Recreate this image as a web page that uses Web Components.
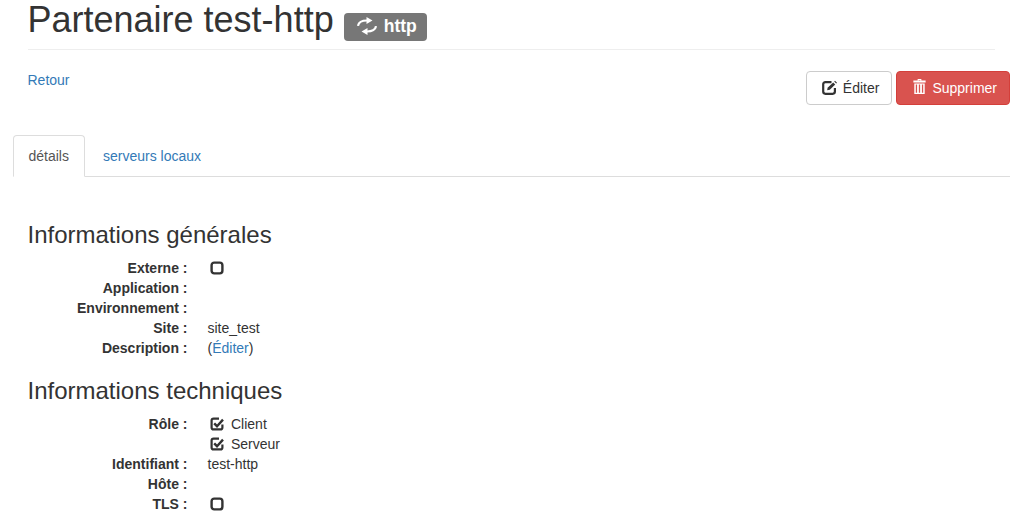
<!DOCTYPE html>
<html lang="fr">
<head>
<meta charset="utf-8">
<title>Partenaire test-http</title>
<style>
  html, body { margin: 0; background: #fff; }
  body {
    font: 14px/20px "Liberation Sans", Arial, sans-serif;
    color: #333;
    height: 520px;
    overflow: hidden;
  }
</style>
</head>
<body>
<partner-page>
  <page-title name="Partenaire test-http" kind="http"></page-title>
  <page-actions></page-actions>
  <page-tabs></page-tabs>
  <info-section title="Informations générales">
    <info-row label="Externe"><check-mark></check-mark></info-row>
    <info-row label="Application"></info-row>
    <info-row label="Environnement"></info-row>
    <info-row label="Site">site_test</info-row>
    <info-row label="Description">(<a href="#" style="color:#337ab7;text-decoration:none">Éditer</a>)</info-row>
  </info-section>
  <info-section title="Informations techniques">
    <info-row label="Rôle"><check-mark checked>Client</check-mark></info-row>
    <info-row><check-mark checked>Serveur</check-mark></info-row>
    <info-row label="Identifiant">test-http</info-row>
    <info-row label="Hôte"></info-row>
    <info-row label="TLS"><check-mark></check-mark></info-row>
  </info-section>
</partner-page>

<script>
const ICONS = {
    retweet: `<g fill="none" stroke="#fff" stroke-width="2.2"><path d="M1 8.8C1.6 5 4 3.5 10 3.5"/><path d="M19 9.2C18.4 13 16 14.5 10 14.5"/></g><path d="M9.5 0 15.5 3.5 9.5 7ZM10.5 11 4.5 14.5 10.5 18Z" fill="#fff"/>`,
    edit: `<g fill="none" stroke="currentColor" stroke-width="2.2"><path d="M9.5 2.1H3.4C2 2.1 1.2 2.9 1.2 4.3v7.3c0 1.4.8 2.2 2.2 2.2h7.3c1.4 0 2.2-.8 2.2-2.2V8"/></g><path d="M11.2 2.4 13.2 4.4 7.8 9.8 5.2 10.2 5.6 7.8Z"/><path d="M12.2 1.6 13 .8 15 2.8 14.2 3.6Z"/>`,
    trash: `<path d="M5 0h4v1.6h4.6v2H.4v-2H5V.9H6V1.6h2V.9H5ZM1.4 4.4h11.2V15H1.4ZM3 5.6V13.8H4.4V5.6ZM6.3 5.6V13.8H7.7V5.6ZM9.6 5.6V13.8H11V5.6Z" fill-rule="evenodd"/>`
};

class PartnerPage extends HTMLElement {
    constructor() {
        super();
        this.attachShadow({ mode: "open" });
        this.shadowRoot.innerHTML = `
      <style>
        :host { display: block; padding: 0 7px 0 12.5px; }
      </style>
      <slot></slot>
    `;
    }
}

class PageTitle extends HTMLElement {
    constructor() {
        super();
        this.attachShadow({ mode: "open" });
    }

    connectedCallback() {
        this.shadowRoot.innerHTML = `
      <style>
        :host { display: block; margin: 0 15px; padding-bottom: 9px; border-bottom: 1px solid #eee; height: 39.6px; }
        h1 { margin: 0; font: 500 36px/1.1 "Liberation Sans", Arial, sans-serif; color: #333; white-space: nowrap; height: 39.6px; }
        .label {
          display: inline-flex;
          align-items: center;
          gap: 7px;
          padding: 3px 10px 4px 13px;
          height: 21px;
          border-radius: 4px;
          background: #777;
          color: #fff;
          font-size: 17.55px;
          line-height: 21px;
          font-weight: 700;
          vertical-align: -3px;
        }
        svg { width: 20px; height: 18px; }
      </style>
      <h1>${this.getAttribute("name")} <span class="label"><svg viewBox="0 0 20 18">${ICONS.retweet}</svg>${this.getAttribute("kind")}</span></h1>
    `;
    }
}

class PageActions extends HTMLElement {
    constructor() {
        super();
        this.attachShadow({ mode: "open" });
        this.shadowRoot.innerHTML = `
      <style>
        :host { display: flex; justify-content: space-between; align-items: flex-start; padding: 21px 0 0 15px; height: 34px; }
        a { color: #337ab7; text-decoration: none; }
        .back { margin-top: -.5px; }
        .btns { display: flex; gap: 4px; }
        button {
          display: flex;
          align-items: center;
          height: 34px;
          padding: 0 12px;
          border: 1px solid #ccc;
          border-radius: 4px;
          background: #fff;
          color: #333;
          font: 14px/20px "Liberation Sans", Arial, sans-serif;
          box-sizing: border-box;
        }
        button.danger { background: #d9534f; border-color: #d43f3a; color: #fff; }
        svg { fill: currentColor; }
        .edit { padding-left: 15px; }
        .edit svg { width: 15px; height: 15px; margin-right: 6px; }
        .danger { padding-left: 16px; }
        .danger svg { width: 13px; height: 15px; margin: -2px 6px 0 0; }
      </style>
      <a class="back" href="#">Retour</a>
      <div class="btns">
        <button class="edit"><svg viewBox="0 0 15 15">${ICONS.edit}</svg>Éditer</button>
        <button class="danger"><svg viewBox="0 0 14 15" preserveAspectRatio="none">${ICONS.trash}</svg>Supprimer</button>
      </div>
    `;
    }
}

class PageTabs extends HTMLElement {
    constructor() {
        super();
        this.attachShadow({ mode: "open" });
        this.shadowRoot.innerHTML = `
      <style>
        :host { display: flex; margin-top: 30px; border-bottom: 1px solid #ddd; height: 41px; }
        a {
          display: block;
          height: 20px;
          padding: 10px 15px;
          margin-right: 2px;
          border: 1px solid transparent;
          border-radius: 4px 4px 0 0;
          color: #337ab7;
          text-decoration: none;
        }
        a.active { color: #555; background: #fff; border-color: #ddd #ddd #fff; }
      </style>
      <a class="active" href="#">détails</a>
      <a href="#">serveurs locaux</a>
    `;
    }
}

class InfoSection extends HTMLElement {
    constructor() {
        super();
        this.attachShadow({ mode: "open" });
    }

    connectedCallback() {
        this.shadowRoot.innerHTML = `
      <style>
        :host { display: block; padding-left: 15px; }
        :host(:first-of-type) { margin-top: 45px; }
        h3 { margin: 0 0 10px; font: 500 24px/26.4px "Liberation Sans", Arial, sans-serif; color: #333; }
        :host(:last-of-type) h3 { margin-top: 20px; }
      </style>
      <h3>${this.getAttribute("title")}</h3>
      <slot></slot>
    `;
    }
}

class InfoRow extends HTMLElement {
    constructor() {
        super();
        this.attachShadow({ mode: "open" });
    }

    connectedCallback() {
        const label = this.getAttribute("label");
        this.shadowRoot.innerHTML = `
      <style>
        :host { display: grid; grid-template-columns: 160px 1fr; column-gap: 20px; min-height: 20px; }
        dt { font-weight: 700; text-align: right; white-space: nowrap; }
        dd { margin: 0; }
      </style>
      <dt>${label ? label + " :" : ""}</dt>
      <dd><slot></slot></dd>
    `;
    }
}

class CheckMark extends HTMLElement {
    constructor() {
        super();
        this.attachShadow({ mode: "open" });
    }

    connectedCallback() {
        const checked = this.hasAttribute("checked");
        const box = checked
            ? `<path d="M9 1.6H3.6C2.3 1.6 1.6 2.3 1.6 3.6v6.8c0 1.3.7 2 2 2h6.8c1.3 0 2-.7 2-2V7.6" fill="none" stroke="#333" stroke-width="2.2"/><path d="M4.2 6.4 7 9.2 13 2.6" fill="none" stroke="#333" stroke-width="2.4"/>`
            : `<rect x="1.6" y="1.6" width="10.8" height="10.8" rx="2.6" fill="none" stroke="#333" stroke-width="2.4"/>`;
        this.shadowRoot.innerHTML = `
      <style>
        :host { display: inline-flex; align-items: center; gap: 7px; vertical-align: top; height: 20px; padding-left: 2.5px; }
        svg { width: 14px; height: 14px; }
      </style>
      <svg viewBox="0 0 14 14">${box}</svg><slot></slot>
    `;
    }
}

customElements.define("partner-page", PartnerPage);
customElements.define("page-title", PageTitle);
customElements.define("page-actions", PageActions);
customElements.define("page-tabs", PageTabs);
customElements.define("info-section", InfoSection);
customElements.define("info-row", InfoRow);
customElements.define("check-mark", CheckMark);
</script>
</body>
</html>
